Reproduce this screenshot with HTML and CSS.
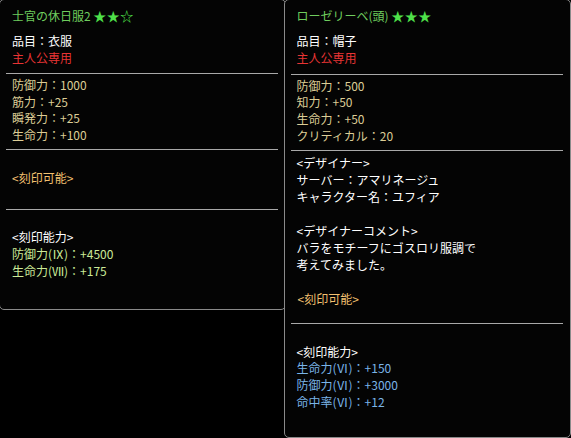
FILE: index.html
```html
<!DOCTYPE html>
<html lang="ja">
<head>
<meta charset="utf-8">
<title>Item tooltips</title>
<link rel="stylesheet" href="styles.css">
</head>
<body>
<div class="stage">
  <div class="panel panel-left">
    <div class="title">士官の休日服2 <span class="stars">★★☆</span></div>
    <div class="info">
      <div class="row white">品目：衣服</div>
      <div class="row red">主人公専用</div>
    </div>
    <div class="divider div-a"></div>
    <div class="stats">
      <div class="row khaki">防御力：1000</div>
      <div class="row khaki">筋力：+25</div>
      <div class="row khaki">瞬発力：+25</div>
      <div class="row khaki">生命力：+100</div>
    </div>
    <div class="divider div-b"></div>
    <div class="engrave-ok">
      <div class="row orange">&lt;刻印可能&gt;</div>
    </div>
    <div class="divider div-c"></div>
    <div class="engrave">
      <div class="row white">&lt;刻印能力&gt;</div>
      <div class="row lime">防御力(Ⅸ)：+4500</div>
      <div class="row lime">生命力(Ⅶ)：+175</div>
    </div>
  </div>

  <div class="panel panel-right">
    <div class="title">ローゼリーベ(頭) <span class="stars">★★★</span></div>
    <div class="info">
      <div class="row white">品目：帽子</div>
      <div class="row red">主人公専用</div>
    </div>
    <div class="divider div-r1"></div>
    <div class="stats">
      <div class="row khaki">防御力：500</div>
      <div class="row khaki">知力：+50</div>
      <div class="row khaki">生命力：+50</div>
      <div class="row khaki">クリティカル：20</div>
    </div>
    <div class="divider div-r2"></div>
    <div class="designer">
      <div class="line white">&lt;デザイナー&gt;</div>
      <div class="line white">サーバー：アマリネージュ</div>
      <div class="line white">キャラクター名：ユフィア</div>
    </div>
    <div class="comment">
      <div class="line white">&lt;デザイナーコメント&gt;</div>
      <div class="line white">バラをモチーフにゴスロリ服調で</div>
      <div class="line white">考えてみました。</div>
    </div>
    <div class="engrave-ok-r">
      <div class="line orange">&lt;刻印可能&gt;</div>
    </div>
    <div class="divider div-r3"></div>
    <div class="engrave engrave-r">
      <div class="row white">&lt;刻印能力&gt;</div>
      <div class="row blue">生命力(Ⅵ)：+150</div>
      <div class="row blue">防御力(Ⅵ)：+3000</div>
      <div class="row blue">命中率(Ⅵ)：+12</div>
    </div>
  </div>
</div>
</body>
</html>
```

FILE: styles.css
```css
html, body {
  margin: 0;
  padding: 0;
  background: #000;
  overflow: hidden;
}

body {
  font-family: "Noto Sans CJK JP", "Noto Sans", sans-serif;
  font-size: 12px;
  color: #fff;
}

.stage {
  display: flex;
  align-items: flex-start;
  margin-top: -1px;
  margin-left: -1px;
}

.panel {
  box-sizing: border-box;
  width: 287px;
  background: #040404;
  border: 1px solid #8a8a8a;
  border-radius: 5px;
  padding-top: 7px;
  display: flex;
  flex-direction: column;
}

.panel-left {
  height: 311px;
}

.panel-right {
  height: 439px;
  margin-left: -2px;
  width: 288px;
}

.title {
  line-height: 18px;
  padding-left: 12px;
  color: #6fcd5e;
  white-space: nowrap;
}

.stars {
  color: #4fe04a;
  font-size: 13px;
  letter-spacing: 0.5px;
}

.row {
  line-height: 16.7px;
  padding-left: 12px;
  white-space: nowrap;
}

.line {
  line-height: 17px;
  padding-left: 12px;
  white-space: nowrap;
}

.info {
  margin-top: 8px;
}

.divider {
  height: 1px;
  background: #a9a9a9;
  margin-left: 6px;
  margin-right: 7px;
}

.div-a { margin-top: 6.5px; }
.stats { margin-top: 3px; }
.div-b { margin-top: 5px; }
.engrave-ok { margin-top: 20px; }
.div-c { margin-top: 22.5px; }
.engrave { margin-top: 19.5px; }

.div-r1 { margin-top: 7.5px; }
.panel-right .stats { margin-top: 2.6px; }
.div-r2 { margin-top: 6px; }
.designer { margin-top: 2.2px; }
.comment { margin-top: 17px; }
.engrave-ok-r { margin-top: 17.4px; }
.engrave-ok-r .line { padding-left: 13px; }
.div-r3 { margin-top: 15.7px; }
.engrave-r { margin-top: 20px; }

.white { color: #ffffff; }
.red { color: #e83434; }
.khaki { color: #dccd96; }
.orange { color: #f2c070; }
.lime { color: #cbea98; }
.blue { color: #7ab4e8; }
```
